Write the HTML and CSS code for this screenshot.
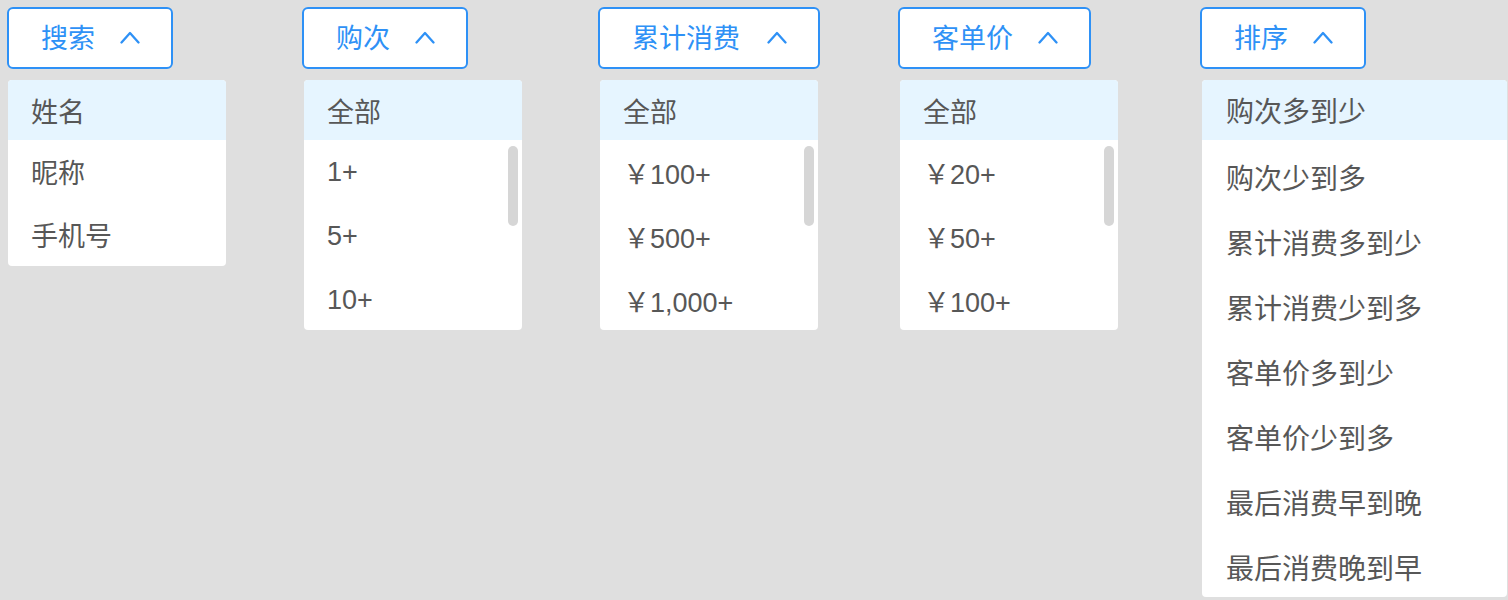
FILE: index.html
```html
<!DOCTYPE html>
<html lang="zh-CN">
<head>
<meta charset="utf-8">
<title>筛选</title>
<link rel="stylesheet" href="styles.css">
</head>
<body>
<div class="bar">
  <div class="col">
    <div class="trigger"><span class="label">搜索</span><svg class="chev" viewBox="0 0 20 14" width="20" height="14"><polyline points="1.5,12.5 10,3 18.5,12.5"/></svg></div>
    <div class="dd dd-first">
      <div class="opt active">姓名</div>
      <div class="opt">昵称</div>
      <div class="opt">手机号</div>
    </div>
  </div>
  <div class="col">
    <div class="trigger"><span class="label">购次</span><svg class="chev" viewBox="0 0 20 14" width="20" height="14"><polyline points="1.5,12.5 10,3 18.5,12.5"/></svg></div>
    <div class="dd scroll">
      <div class="opt active">全部</div>
      <div class="opt tall">1+</div>
      <div class="opt tall">5+</div>
      <div class="opt tall">10+</div>
      <div class="thumb"></div>
    </div>
  </div>
  <div class="col">
    <div class="trigger wide"><span class="label">累计消费</span><svg class="chev" viewBox="0 0 20 14" width="20" height="14"><polyline points="1.5,12.5 10,3 18.5,12.5"/></svg></div>
    <div class="dd scroll">
      <div class="opt active">全部</div>
      <div class="opt tall">￥100+</div>
      <div class="opt tall">￥500+</div>
      <div class="opt tall">￥1,000+</div>
      <div class="thumb"></div>
    </div>
  </div>
  <div class="col">
    <div class="trigger"><span class="label">客单价</span><svg class="chev" viewBox="0 0 20 14" width="20" height="14"><polyline points="1.5,12.5 10,3 18.5,12.5"/></svg></div>
    <div class="dd scroll">
      <div class="opt active">全部</div>
      <div class="opt tall">￥20+</div>
      <div class="opt tall">￥50+</div>
      <div class="opt tall">￥100+</div>
      <div class="thumb"></div>
    </div>
  </div>
  <div class="col">
    <div class="trigger"><span class="label">排序</span><svg class="chev" viewBox="0 0 20 14" width="20" height="14"><polyline points="1.5,12.5 10,3 18.5,12.5"/></svg></div>
    <div class="dd sort">
      <div class="opt active">购次多到少</div>
      <div class="sort-list">
        <div class="opt sort-opt">购次少到多</div>
        <div class="opt sort-opt">累计消费多到少</div>
        <div class="opt sort-opt">累计消费少到多</div>
        <div class="opt sort-opt">客单价多到少</div>
        <div class="opt sort-opt">客单价少到多</div>
        <div class="opt sort-opt">最后消费早到晚</div>
        <div class="opt sort-opt">最后消费晚到早</div>
      </div>
    </div>
  </div>
</div>
</body>
</html>
```

FILE: styles.css
```css
html, body {
  margin: 0;
  padding: 0;
}
body {
  width: 1508px;
  height: 600px;
  overflow: hidden;
  background: #dfdfdf;
  font-family: "Liberation Sans", "Noto Sans CJK SC", sans-serif;
}
.bar {
  display: grid;
  grid-template-columns: 295px 296px 300px 302px 1fr;
  padding: 7px 0 0 7px;
  align-items: start;
}
.col {
  display: flex;
  flex-direction: column;
  align-items: flex-start;
}
.trigger {
  box-sizing: border-box;
  height: 62px;
  display: inline-flex;
  align-items: center;
  gap: 25px;
  padding: 0 31px 0 32px;
  border: 2px solid #2e91f6;
  border-radius: 6px;
  background: #ffffff;
  color: #2e91f6;
  font-size: 27px;
  line-height: 1;
}
.trigger.wide {
  gap: 27px;
}
.label {
  display: block;
  padding-top: 2px;
}
.chev {
  display: block;
  margin-bottom: 3px;
  fill: none;
  stroke: #2e91f6;
  stroke-width: 2.3;
  stroke-linecap: round;
  stroke-linejoin: round;
}
.dd {
  position: relative;
  box-sizing: border-box;
  width: 218px;
  margin-top: 11px;
  margin-left: 2px;
  background: #ffffff;
  border-radius: 4px;
  overflow: hidden;
}
.dd-first {
  margin-left: 1px;
}
.opt {
  box-sizing: border-box;
  height: 63px;
  display: flex;
  align-items: center;
  padding-left: 23px;
  font-size: 27px;
  color: #575757;
  white-space: nowrap;
}
.opt.active {
  height: 60px;
  background: #e6f5ff;
}
.opt.tall {
  height: 64px;
  padding-top: 1px;
}
.scroll {
  height: 250px;
}
.thumb {
  position: absolute;
  right: 4px;
  top: 66px;
  width: 10px;
  height: 80px;
  border-radius: 5px;
  background: #d6d6d6;
}
.sort {
  width: 305px;
  height: 517px;
}
.sort .opt {
  font-size: 28px;
  padding-left: 24px;
}
.sort-list {
  padding-top: 4px;
}
.sort .opt.sort-opt {
  height: 65px;
}
```
